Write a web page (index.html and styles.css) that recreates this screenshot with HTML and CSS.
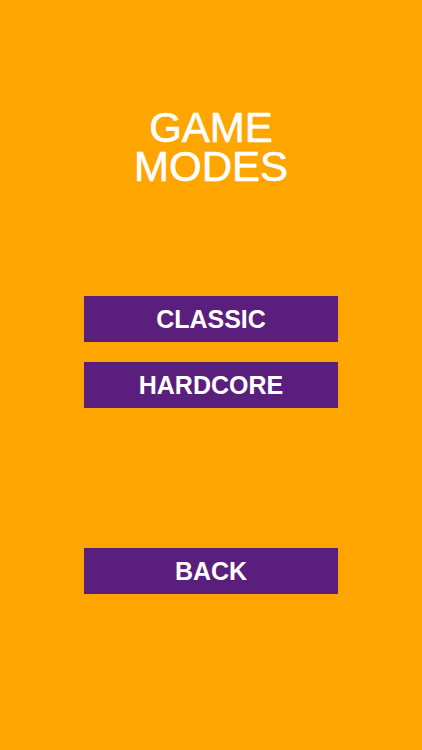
FILE: index.html
```html
<!DOCTYPE html>
<html>
<head>
<meta charset="utf-8">
<link rel="stylesheet" href="styles.css">
</head>
<body>
<div class="screen">
  <h1 class="title">GAME<br>MODES</h1>
  <div class="modes">
    <button class="btn">CLASSIC</button>
    <button class="btn">HARDCORE</button>
  </div>
  <button class="btn back">BACK</button>
</div>
</body>
</html>
```
FILE: styles.css
```css
html, body {
  margin: 0;
  padding: 0;
  background: #FFA500;
}
.screen {
  width: 422px;
  height: 750px;
  display: flex;
  flex-direction: column;
  align-items: center;
  font-family: "Liberation Sans", Arial, sans-serif;
}
.title {
  margin: 108px 0 0 0;
  font-weight: normal;
  font-size: 42px;
  line-height: 39px;
  color: #ffffff;
  text-align: center;
  -webkit-text-stroke: 0.6px #ffffff;
}
.modes {
  margin-top: 110px;
  display: flex;
  flex-direction: column;
  gap: 20px;
}
.btn {
  width: 254px;
  height: 46px;
  border: 0;
  margin: 0;
  padding: 0;
  background: #5A1E7C;
  color: #ffffff;
  font-family: "Liberation Sans", Arial, sans-serif;
  font-weight: bold;
  font-size: 25px;
  display: block;
}
.back {
  margin-top: 140px;
}
```
